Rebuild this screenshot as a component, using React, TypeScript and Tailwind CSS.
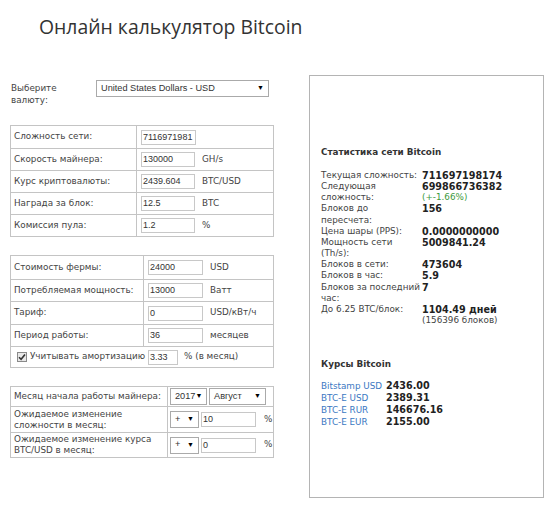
import React from 'react';

const inputCls =
  'h-[15px] border border-[#c8c8c8] bg-white px-[1px] text-[9px] leading-[13px] text-[#333] font-["Liberation_Sans",Arial,sans-serif] overflow-hidden whitespace-nowrap';

const Field = ({ value, w = 'w-[54px]' }: { value: string; w?: string }) => (
  <div className={`${inputCls} ${w}`}>{value}</div>
);

const FakeSelect = ({ value, w }: { value: string; w: string }) => (
  <div
    className={`${w} h-[17px] border border-[#aaa] bg-white flex items-center justify-between pl-[4px] pr-[4px] text-[9.2px] text-[#333] font-["Liberation_Sans",Arial,sans-serif]`}
  >
    <span>{value}</span>
    <span className="text-[7px] text-black">▼</span>
  </div>
);

const rowsA = [
  { label: 'Сложность сети:', value: '7116971981', unit: '', wide: true },
  { label: 'Скорость майнера:', value: '130000', unit: 'GH/s' },
  { label: 'Курс криптовалюты:', value: '2439.604', unit: 'BTC/USD' },
  { label: 'Награда за блок:', value: '12.5', unit: 'BTC' },
  { label: 'Комиссия пула:', value: '1.2', unit: '%' },
];

const rowsB = [
  { label: 'Стоимость фермы:', value: '24000', unit: 'USD', h: 'h-[23px]' },
  { label: 'Потребляемая мощность:', value: '13000', unit: 'Ватт', h: 'h-[22px]' },
  { label: 'Тариф:', value: '0', unit: 'USD/кВт/ч', h: 'h-[23px]' },
  { label: 'Период работы:', value: '36', unit: 'месяцев', h: 'h-[22px]' },
];

const stats: { label: string[]; value: React.ReactNode }[] = [
  { label: ['Текущая сложность:'], value: '711697198174' },
  {
    label: ['Следующая', 'сложность:'],
    value: (
      <>
        <div>699866736382</div>
        <div className="font-normal text-[#3c9a3c] text-[8.8px]">(+-1.66%)</div>
      </>
    ),
  },
  { label: ['Блоков до', 'пересчета:'], value: '156' },
  { label: ['Цена шары (PPS):'], value: '0.0000000000' },
  { label: ['Мощность сети', '(Th/s):'], value: '5009841.24' },
  { label: ['Блоков в сети:'], value: '473604' },
  { label: ['Блоков в час:'], value: '5.9' },
  { label: ['Блоков за последний', 'час:'], value: '7' },
  {
    label: ['До 6.25 BTC/блок:'],
    value: (
      <>
        <div>1104.49 дней</div>
        <div className="font-normal text-[#444] text-[8.8px]">(156396 блоков)</div>
      </>
    ),
  },
];

const rates = [
  { name: 'Bitstamp USD', value: '2436.00' },
  { name: 'BTC-E USD', value: '2389.31' },
  { name: 'BTC-E RUR', value: '146676.16' },
  { name: 'BTC-E EUR', value: '2155.00' },
];

export default function App() {
  return (
    <div className='w-[550px] h-[510px] bg-white text-[#444] font-["DejaVu_Sans",Verdana,sans-serif] text-[8.8px] overflow-hidden whitespace-nowrap'>
      {/* Заголовок */}
      <h1 className='pl-[39px] pt-[15px] h-[75px] text-[19.4px] text-[#333] font-["Open_Sans",sans-serif] leading-[24px]'>
        Онлайн калькулятор Bitcoin
      </h1>

      <div className="flex items-start">
        {/* Левая колонка */}
        <div className="ml-[10px] w-[264px] mt-[5px]">
          <div className="flex items-start h-[45px]">
            <div className="w-[86px] pl-[1px] pt-[3px] leading-[11.5px]">
              Выберите
              <br />
              валюту:
            </div>
            <FakeSelect value="United States Dollars - USD" w="w-[173px]" />
          </div>

          {/* Параметры сети */}
          <div className="border border-[#c4c4c4]">
            {rowsA.map((r, i) => (
              <div key={r.label} className={`flex h-[22px] ${i > 0 ? 'border-t border-[#c4c4c4]' : ''}`}>
                <div className="w-[126px] border-r border-[#c4c4c4] pl-[3px] flex items-center">{r.label}</div>
                <div className="flex items-center pl-[4px] gap-[7px]">
                  <Field value={r.value} w={r.wide ? 'w-[55px]' : 'w-[54px]'} />
                  {r.unit && <span>{r.unit}</span>}
                </div>
              </div>
            ))}
          </div>

          {/* Параметры фермы */}
          <div className="border border-[#c4c4c4] mt-[18px]">
            {rowsB.map((r, i) => (
              <div key={r.label} className={`flex ${r.h} ${i > 0 ? 'border-t border-[#c4c4c4]' : ''}`}>
                <div className="w-[133px] border-r border-[#c4c4c4] pl-[3px] flex items-center">{r.label}</div>
                <div className="flex items-center pl-[4px] gap-[7px]">
                  <Field value={r.value} w="w-[55px]" />
                  <span>{r.unit}</span>
                </div>
              </div>
            ))}
            <div className="flex items-center h-[21px] border-t border-[#c4c4c4] pl-[6px] gap-[3px]">
              <span className="w-[10px] h-[10px] border border-[#8a8a8a] bg-[#e8e8e8] flex items-center justify-center">
                <svg width="8" height="8" viewBox="0 0 8 8">
                  <path d="M1 4.2 L3.1 6.3 L7 1.5" stroke="#333" strokeWidth="1.6" fill="none" />
                </svg>
              </span>
              <span>Учитывать амортизацию</span>
              <Field value="3.33" w="w-[30px]" />
              <span className="ml-[3px]">% (в месяц)</span>
            </div>
          </div>

          {/* Прогноз */}
          <div className="border border-[#c4c4c4] mt-[18px]">
            <div className="flex h-[19px]">
              <div className="w-[157px] border-r border-[#c4c4c4] pl-[3px] flex items-center">Месяц начала работы майнера:</div>
              <div className="flex items-center pl-[2px] gap-[2px]">
                <FakeSelect value="2017" w="w-[37px]" />
                <FakeSelect value="Август" w="w-[57px]" />
              </div>
            </div>
            <div className="flex h-[26px] border-t border-[#c4c4c4]">
              <div className="w-[157px] border-r border-[#c4c4c4] pl-[3px] flex items-center leading-[11px]">
                Ожидаемое изменение
                <br />
                сложности в месяц:
              </div>
              <div className="flex items-center pl-[2px] gap-[2px]">
                <FakeSelect value="+" w="w-[29px]" />
                <Field value="10" w="w-[55px]" />
                <span className="ml-[6px]">%</span>
              </div>
            </div>
            <div className="flex h-[25px] border-t border-[#c4c4c4]">
              <div className="w-[157px] border-r border-[#c4c4c4] pl-[3px] flex items-center leading-[11px]">
                Ожидаемое изменение курса
                <br />
                BTC/USD в месяц:
              </div>
              <div className="flex items-center pl-[2px] gap-[2px]">
                <FakeSelect value="+" w="w-[29px]" />
                <Field value="0" w="w-[55px]" />
                <span className="ml-[6px]">%</span>
              </div>
            </div>
          </div>
        </div>

        {/* Правая панель */}
        <div className="ml-[35px] w-[235px] h-[423px] border border-[#b4b4b4] pl-[11px] pt-[69px]">
          <div className="font-bold text-[#333] leading-[14px]">Статистика сети Bitcoin</div>
          <div className="mt-[11px]">
            {stats.map((s, i) => (
              <div key={i} className="flex">
                <div className="w-[101px] shrink-0">
                  {s.label.map((l, j) => (
                    <div key={j} className="h-[11.15px] leading-[11.15px]">{l}</div>
                  ))}
                </div>
                <div className="font-bold text-[#222] text-[9.6px] leading-[11.15px]">{s.value}</div>
              </div>
            ))}
          </div>

          <div className="mt-[31px] font-bold text-[#333] leading-[14px]">Курсы Bitcoin</div>
          <div className="mt-[9px]">
            {rates.map((r) => (
              <div key={r.name} className="flex h-[12px] items-center">
                <a className="w-[65px] shrink-0 text-[#3b78c2]">{r.name}</a>
                <span className="font-bold text-[#222] text-[9.6px]">{r.value}</span>
              </div>
            ))}
          </div>
        </div>
      </div>
    </div>
  );
}
